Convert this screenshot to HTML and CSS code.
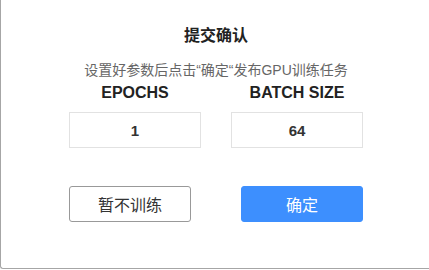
FILE: index.html
```html
<!DOCTYPE html>
<html lang="zh-CN">
<head>
<meta charset="utf-8">
<title>提交确认</title>
<link rel="stylesheet" href="styles.css">
</head>
<body>
<div class="modal">
  <h2 class="title">提交确认</h2>
  <p class="subtitle">设置好参数后点击“确定“发布GPU训练任务</p>
  <div class="fields">
    <div class="field">
      <div class="label">EPOCHS</div>
      <div class="input">1</div>
    </div>
    <div class="field">
      <div class="label">BATCH SIZE</div>
      <div class="input">64</div>
    </div>
  </div>
  <div class="actions">
    <button class="btn btn-cancel">暂不训练</button>
    <button class="btn btn-ok">确定</button>
  </div>
</div>
</body>
</html>
```
FILE: styles.css
```css
html, body {
  margin: 0;
  padding: 0;
  background: #fff;
  overflow: hidden;
  width: 429px;
  height: 270px;
}
* { box-sizing: border-box; }
body {
  font-family: "Liberation Sans", "Noto Sans CJK SC", sans-serif;
  color: #333;
}
.modal {
  width: 431px;
  height: 269px;
  background: #fff;
  border-left: 1px solid #a6a6a6;
  border-bottom: 1px solid #a6a6a6;
  border-bottom-left-radius: 3px;
  padding-top: 24px;
  display: flex;
  flex-direction: column;
  align-items: center;
}
.title {
  margin: 0;
  font-size: 16px;
  line-height: 24px;
  font-weight: bold;
  color: #222;
}
.subtitle {
  margin: 12px 0 0;
  font-size: 14px;
  line-height: 20px;
  color: #666;
}
.fields {
  margin-top: 3px;
  display: grid;
  grid-template-columns: 132px 132px;
  column-gap: 30px;
}
.field {
  display: flex;
  flex-direction: column;
  align-items: center;
}
.label {
  font-size: 16px;
  line-height: 20px;
  font-weight: bold;
  color: #222;
}
.input {
  margin-top: 9px;
  width: 132px;
  height: 36px;
  border: 1px solid #e2e2e2;
  display: flex;
  align-items: center;
  justify-content: center;
  font-size: 15px;
  font-weight: bold;
  color: #333;
}
.actions {
  margin-top: 38px;
  display: flex;
  gap: 50px;
}
.btn {
  width: 122px;
  height: 36px;
  border-radius: 3px;
  font-family: "Liberation Sans", "Noto Sans CJK SC", sans-serif;
  font-size: 16px;
  padding: 0;
}
.btn-cancel {
  background: #fff;
  border: 1px solid #999;
  color: #333;
}
.btn-ok {
  background: #3d8ffe;
  border: 1px solid #3d8ffe;
  color: #fff;
}
```
